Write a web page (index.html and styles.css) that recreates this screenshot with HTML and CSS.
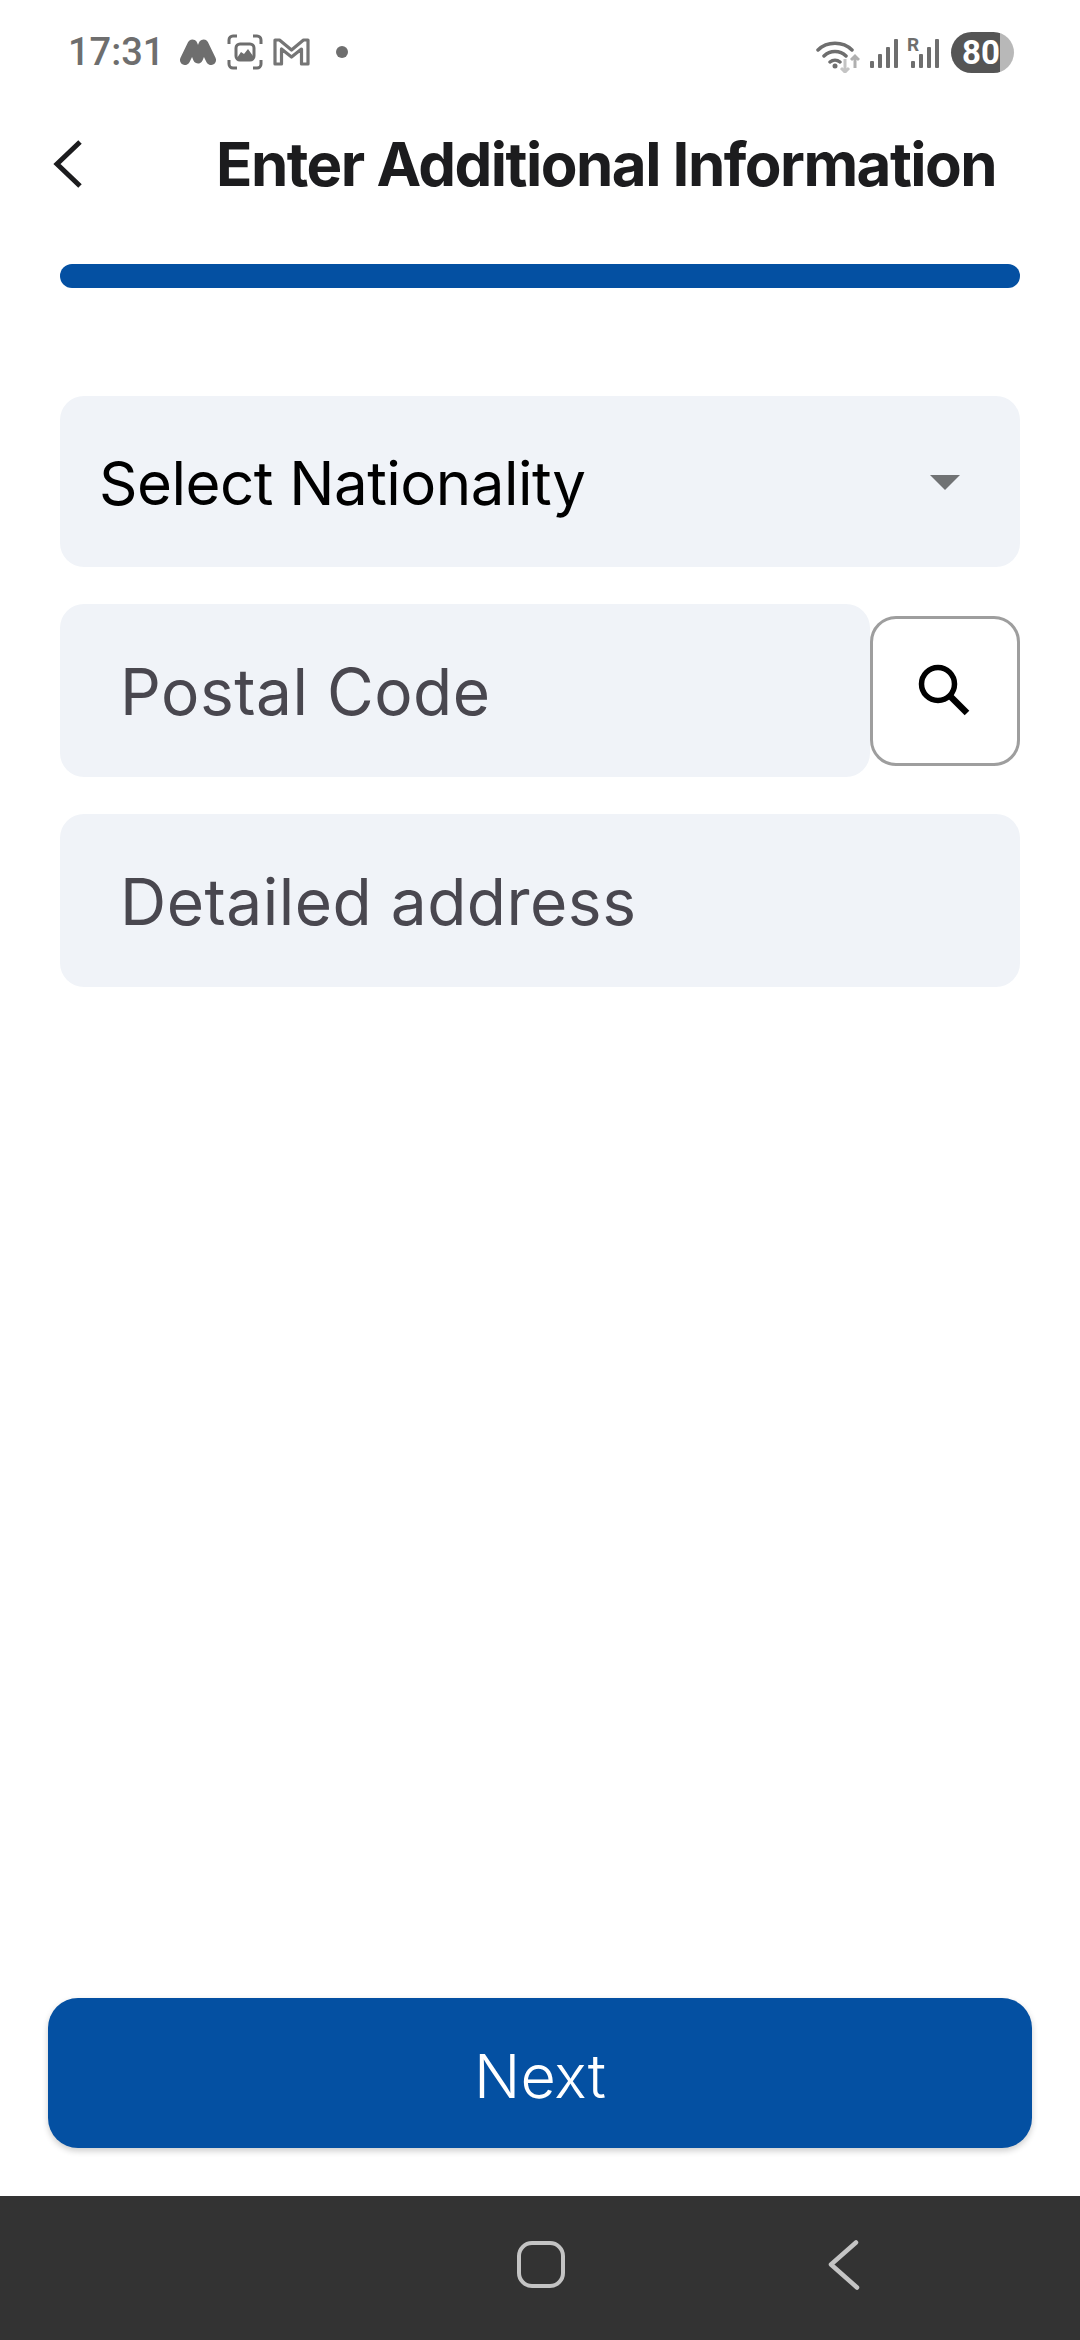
FILE: index.html
```html
<!DOCTYPE html>
<html lang="en">
<head>
<meta charset="utf-8">
<title>Enter Additional Information</title>
<link rel="stylesheet" href="styles.css">
</head>
<body>
<div class="screen">
  <div class="status">
    <div class="status-left">
      <span class="time">17:31</span>
      <svg class="ic-m" width="36" height="26" viewBox="0 0 36 26"><path d="M5 21L12.500 5.500L18 19.500L23.500 5.500L31 21" fill="none" stroke="#6e6e6e" stroke-width="10" stroke-linecap="round" stroke-linejoin="round"/></svg>
      <svg class="ic-shot" width="36" height="36" viewBox="0 0 36 36"><path d="M2 10V6a4 4 0 0 1 4-4h4M26 2h4a4 4 0 0 1 4 4v4M34 26v4a4 4 0 0 1-4 4h-4M10 34H6a4 4 0 0 1-4-4v-4" fill="none" stroke="#6e6e6e" stroke-width="3"/><rect x="9" y="10" width="18" height="16" rx="4" fill="none" stroke="#6e6e6e" stroke-width="3"/><path d="M10 24L14 18L17 20L21 15L26 22V25H10Z" fill="#6e6e6e"/></svg>
      <svg class="ic-gmail" width="37" height="28" viewBox="0 0 37 28"><path d="M2 26V2H6.500L18.500 12L30.500 2H35V26H28.500V11L18.500 19L8.500 11V26Z" fill="none" stroke="#757575" stroke-width="3.200" stroke-linejoin="round"/></svg>
      <span class="dot"></span>
    </div>
    <div class="status-right">
      <svg class="ic-wifi" width="44" height="34" viewBox="0 0 44 34"><path d="M2 11C11 2 27 2 36 11M8 17C14 11 24 11 30 17M14 23C17 20.500 21 20.500 24 23" fill="none" stroke="#6e6e6e" stroke-width="3.500" stroke-linecap="round"/><circle cx="19" cy="27" r="2.500" fill="#6e6e6e"/><path d="M29 20V33M25 29L29 33L33 29" fill="none" stroke="#c4c4c4" stroke-width="3"/><path d="M39 29V17M35 21L39 17L43 21" fill="none" stroke="#b0b0b0" stroke-width="3"/></svg>
      <svg class="ic-signal" width="28" height="30" viewBox="0 0 28 30"><g fill="#6e6e6e"><rect x="0" y="23" width="4" height="7" rx="1"/><rect x="8" y="16" width="4" height="14" rx="1"/><rect x="16" y="9" width="4" height="21" rx="1"/><rect x="24" y="1" width="4" height="29" rx="1"/></g></svg>
      <div class="sim2">
        <span class="roam">R</span>
        <svg width="28" height="30" viewBox="0 0 28 30"><g fill="#6e6e6e"><rect x="0" y="23" width="4" height="7" rx="1"/><rect x="8" y="16" width="4" height="14" rx="1"/><rect x="16" y="9" width="4" height="21" rx="1"/><rect x="24" y="1" width="4" height="29" rx="1"/></g></svg>
      </div>
      <div class="battery"><span class="battery-level">80</span></div>
    </div>
  </div>

  <header class="header">
    <svg class="back" width="32" height="50" viewBox="0 0 32 50"><path d="M28 3L5 25L28 47" fill="none" stroke="#1c1c1e" stroke-width="5"/></svg>
    <h1 class="title">Enter Additional Information</h1>
  </header>

  <div class="progress"></div>

  <main class="form">
    <div class="field select">
      <span class="select-label">Select Nationality</span>
      <span class="caret"></span>
    </div>
    <div class="postal-row">
      <div class="field input"><span class="placeholder">Postal Code</span></div>
      <button class="search" type="button" aria-label="Search">
        <svg width="60" height="60" viewBox="0 0 60 60"><circle cx="23" cy="23" r="16.500" fill="none" stroke="#000" stroke-width="5.500"/><path d="M34.500 34.500L52 52" stroke="#000" stroke-width="6.500" fill="none"/></svg>
      </button>
    </div>
    <div class="field input"><span class="placeholder">Detailed address</span></div>
  </main>

  <div class="spacer"></div>

  <button class="next" type="button">Next</button>

  <nav class="nav">
    <span class="nav-home"></span>
    <svg class="nav-back" width="32" height="50" viewBox="0 0 32 50"><path d="M28 2.500L3 24.500L29 47.500" fill="none" stroke="#c4c4c4" stroke-width="4.500" stroke-linecap="round" stroke-linejoin="round"/></svg>
  </nav>
</div>
</body>
</html>
```
FILE: styles.css
```css
* { box-sizing: border-box; }
html, body { margin: 0; padding: 0; background: #fff; }
.screen {
  width: 1080px;
  height: 2340px;
  display: flex;
  flex-direction: column;
  font-family: Inter, "Noto Sans", sans-serif;
  background: #fff;
  overflow: hidden;
}
.status {
  height: 104px;
  flex: none;
  display: flex;
  align-items: center;
  justify-content: space-between;
  padding: 0 66px 0 68px;
  color: #6e6e6e;
}
.status-left, .status-right { display: flex; align-items: center; }
.time { font-family: Roboto, sans-serif; font-size: 38px; line-height: 1; font-weight: 500; color: #6e6e6e; width: 112px; }
.ic-shot { margin-left: 11px; }
.ic-gmail { margin-left: 10px; }
.dot { width: 12px; height: 12px; border-radius: 50%; background: #6e6e6e; margin-left: 26px; }
.ic-wifi { margin-top: 8px; }
.ic-signal { margin-left: 10px; margin-top: 2px; }
.sim2 { position: relative; margin-left: 13px; margin-top: 2px; display: flex; }
.roam { position: absolute; left: -4px; top: -3px; font: 700 19px/1 Roboto, sans-serif; color: #6e6e6e; background: #fff; padding-right: 1px; }
.battery {
  margin-left: 12px;
  width: 63px;
  height: 41px;
  border-radius: 21px;
  background: linear-gradient(90deg, #555 0, #555 49px, #b8b8b8 49px);
  color: #fff;
  display: flex;
  align-items: center;
  padding-left: 11px;
}
.battery-level { font: 700 33px/1 Roboto, sans-serif; }
.header {
  height: 120px;
  flex: none;
  display: flex;
  align-items: center;
  padding-left: 52px;
}
.title {
  margin: 0 0 0 132px;
  font-size: 60px;
  font-weight: 700;
  letter-spacing: -1.530px;
  color: #1c1c1e;
  white-space: nowrap;
  line-height: 1;
}
.progress {
  flex: none;
  margin: 40px 60px 0;
  height: 24px;
  border-radius: 12px;
  background: #0450a2;
}
.form {
  flex: none;
  margin: 108px 60px 0;
  display: flex;
  flex-direction: column;
  gap: 37px;
}
.field {
  background: #f0f3f8;
  border-radius: 24px;
  display: flex;
  align-items: center;
}
.select {
  height: 171px;
  padding: 3px 60px 0 39px;
  justify-content: space-between;
}
.select-label { font-size: 60px; color: #000; letter-spacing: -0.500px; }
.caret {
  width: 0;
  height: 0;
  margin-top: -1px;
  border-left: 15px solid transparent;
  border-right: 15px solid transparent;
  border-top: 15px solid #707274;
}
.input { height: 173px; padding: 2px 0 0 60px; }
.placeholder { font-size: 64px; color: #49474f; letter-spacing: 0.500px; }
.postal-row { display: flex; align-items: center; }
.postal-row .input { width: 810px; flex: none; }
.search {
  width: 150px;
  height: 150px;
  flex: none;
  padding: 0;
  background: #fff;
  border: 3px solid #9e9e9e;
  border-radius: 26px;
  display: flex;
  align-items: center;
  justify-content: center;
}
.spacer { flex: 1; }
.next {
  flex: none;
  margin: 0 48px 48px;
  height: 150px;
  border: 0;
  border-radius: 30px;
  background: #0450a2;
  color: #fff;
  font-family: Inter, sans-serif;
  font-size: 61px;
  font-weight: 300;
  padding: 5px 0 0;
  box-shadow: 0 3px 6px rgba(0, 0, 0, .2);
}
.nav {
  height: 144px;
  flex: none;
  background: #333;
  display: flex;
  align-items: center;
  padding: 0 0 7px 517px;
}
.nav-home {
  width: 48px;
  height: 47px;
  border: 4.500px solid #c4c4c4;
  border-radius: 15px;
}
.nav-back { margin-left: 263px; }
```
